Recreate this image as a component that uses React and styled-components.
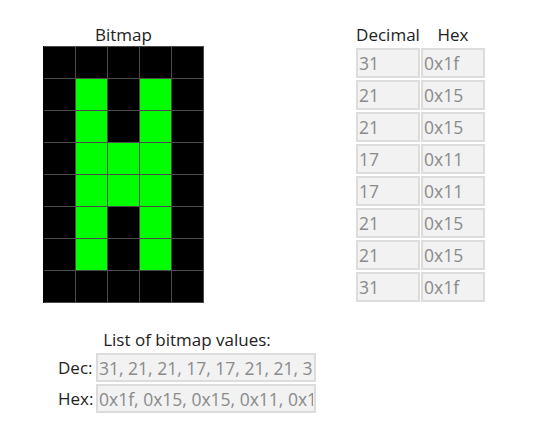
import React from "react";
import styled, { createGlobalStyle } from "styled-components";

const Global = createGlobalStyle`
  html, body { margin: 0; padding: 0; background: #fff; }
  body {
    font-family: "Open Sans", "DejaVu Sans", sans-serif;
    font-size: 17px;
    color: #222;
  }
`;

const Page = styled.div`
  padding: 24px 0 0 43px;
`;

const TopRow = styled.div`
  display: flex;
  align-items: flex-start;
`;

const BitmapCol = styled.div`
  display: flex;
  flex-direction: column;
  width: 161px;
`;

const Heading = styled.div`
  line-height: 22px;
  text-align: center;
`;

const Grid = styled.div`
  display: grid;
  grid-template-columns: repeat(5, 31px);
  grid-auto-rows: 31px;
  gap: 1px;
  padding: 1px 1px 1px 0;
  background: #4a4a4a;
  border-left: 1px solid #000;
`;

const Cell = styled.div`
  background: ${(p) => (p.$on ? "#000" : "#00ff00")};
`;

const ValueTable = styled.div`
  margin-left: 152px;
  display: grid;
  grid-template-columns: 64px 64px;
  column-gap: 1px;
  row-gap: 2px;
`;

const ColHead = styled.div`
  line-height: 22px;
  text-align: center;
`;

const Field = styled.input`
  box-sizing: border-box;
  width: ${(p) => p.$w || 64}px;
  height: ${(p) => p.$h || 30}px;
  margin: 0;
  padding: 0 1px;
  border: 2px solid #dcdcdc;
  background: #f2f2f2;
  color: #8a8a8a;
  font-family: inherit;
  font-size: 17.5px;
  outline: none;
`;

const ListBlock = styled.div`
  margin: 26px 0 0 15px;
  display: grid;
  grid-template-columns: 34px 220px;
  column-gap: 4px;
  row-gap: 2px;
  width: max-content;
`;

const ListTitle = styled.div`
  grid-column: 1 / -1;
  line-height: 22px;
  text-align: center;
`;

const Label = styled.div`
  line-height: 29px;
  text-align: right;
  white-space: nowrap;
`;

const values = [31, 21, 21, 17, 17, 21, 21, 31];
const hex = (v) => "0x" + v.toString(16);

export default function App() {
  return (
    <Page>
      <Global />
      <TopRow>
        <BitmapCol>
          <Heading>Bitmap</Heading>
          <Grid>
            {values.map((v, r) =>
              [4, 3, 2, 1, 0].map((b) => (
                <Cell key={r + "-" + b} $on={((v >> b) & 1) === 1} />
              ))
            )}
          </Grid>
        </BitmapCol>
        <ValueTable>
          <ColHead>Decimal</ColHead>
          <ColHead>Hex</ColHead>
          {values.map((v, i) => (
            <React.Fragment key={i}>
              <Field readOnly value={String(v)} />
              <Field readOnly value={hex(v)} />
            </React.Fragment>
          ))}
        </ValueTable>
      </TopRow>
      <ListBlock>
        <ListTitle>List of bitmap values:</ListTitle>
        <Label>Dec:</Label>
        <Field readOnly $w={220} $h={29} value={values.join(", ")} />
        <Label>Hex:</Label>
        <Field readOnly $w={220} $h={29} value={values.map(hex).join(", ")} />
      </ListBlock>
    </Page>
  );
}
